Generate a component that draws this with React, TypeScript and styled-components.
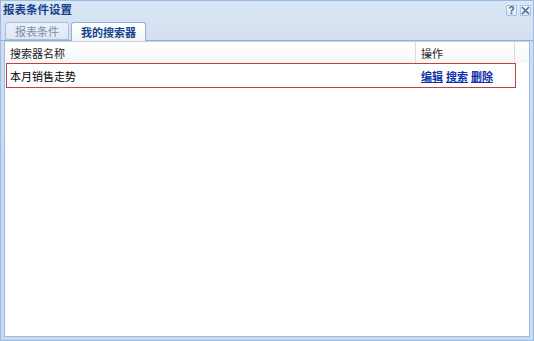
import styled, { createGlobalStyle } from 'styled-components';

const GlobalStyle = createGlobalStyle`
  html, body {
    margin: 0;
    padding: 0;
    background: #ffffff;
  }
  body {
    font-family: "Liberation Sans", "Noto Sans CJK SC", sans-serif;
    font-size: 11px;
  }
`;

const searchers = [{ id: 1, name: '本月销售走势' }];

function App() {
  return (
    <>
      <GlobalStyle />
      <Window>
        <Header>
          <Title>报表条件设置</Title>
          <Tools>
            <ToolButton title="帮助">
              <HelpGlyph>?</HelpGlyph>
            </ToolButton>
            <ToolButton title="关闭">
              <svg width="9" height="9" viewBox="0 0 9 9">
                <path d="M1 1 L8 8 M8 1 L1 8" stroke="#4a6a94" strokeWidth="1.6" fill="none" />
              </svg>
            </ToolButton>
          </Tools>
        </Header>
        <TabStrip>
          <Tab>报表条件</Tab>
          <Tab $active>我的搜索器</Tab>
        </TabStrip>
        <Body>
          <GridHeader>
            <HeadCell $width={411}>搜索器名称</HeadCell>
            <HeadCell $width={99}>操作</HeadCell>
            <HeadFiller />
          </GridHeader>
          {searchers.map((s) => (
            <Row key={s.id}>
              <NameCell>{s.name}</NameCell>
              <OpCell>
                <OpLink href="#">编辑</OpLink>
                <OpLink href="#">搜索</OpLink>
                <OpLink href="#">删除</OpLink>
              </OpCell>
            </Row>
          ))}
        </Body>
      </Window>
    </>
  );
}

const Window = styled.div`
  width: 534px;
  height: 341px;
  box-sizing: border-box;
  border: 1px solid #99bbe8;
  background: linear-gradient(#dae6f4, #cfdcee 60px, #cbd9ec);
  display: flex;
  flex-direction: column;
`;

const Header = styled.div`
  height: 19px;
  display: flex;
  align-items: center;
  justify-content: space-between;
  padding: 0 2px 0 2px;
`;

const Title = styled.div`
  color: #15428b;
  font-weight: bold;
  font-size: 11.5px;
  line-height: 14px;
  margin-top: -1px;
`;

const Tools = styled.div`
  display: flex;
  gap: 3px;
  align-items: center;
`;

const ToolButton = styled.div`
  width: 11px;
  height: 11px;
  box-sizing: border-box;
  border: 1px solid #a9c2e2;
  background: linear-gradient(#f4f8fd, #d9e5f4);
  display: flex;
  align-items: center;
  justify-content: center;
  border-radius: 1px;
`;

const HelpGlyph = styled.span`
  color: #3b5f91;
  font-weight: bold;
  font-size: 10px;
  line-height: 9px;
  font-family: "Liberation Sans", sans-serif;
`;

const TabStrip = styled.div`
  height: 18px;
  padding: 2px 0 0 4px;
  display: flex;
  align-items: flex-end;
  gap: 2px;
  border-bottom: 1px solid #8db2e3;
`;

const Tab = styled.div<{ $active?: boolean }>`
  box-sizing: border-box;
  padding: 0 9px;
  margin-bottom: ${(p) => (p.$active ? '-1px' : '0')};
  height: ${(p) => (p.$active ? '19px' : '18px')};
  display: flex;
  align-items: center;
  border: 1px solid ${(p) => (p.$active ? '#8db2e3' : '#a7c0e0')};
  border-bottom: ${(p) => (p.$active ? 'none' : '1px solid #a7c0e0')};
  border-radius: 3px 3px 0 0;
  background: ${(p) =>
    p.$active
      ? 'linear-gradient(#ffffff, #f2f6fb)'
      : 'linear-gradient(#edf2f9, #dce6f3)'};
  color: ${(p) => (p.$active ? '#15428b' : '#7d8ea8')};
  font-weight: ${(p) => (p.$active ? 'bold' : 'normal')};
  font-size: 11px;
`;

const Body = styled.div`
  flex: 1;
  margin: 0 3px 3px 3px;
  background: #ffffff;
  border: 1px solid #99bbe8;
  border-top: none;
  display: flex;
  flex-direction: column;
`;

const GridHeader = styled.div`
  height: 21px;
  display: flex;
  background: linear-gradient(#ffffff, #f7f7f7);
  border-top: 1px solid #d0d0d0;
`;

const HeadCell = styled.div<{ $width: number }>`
  width: ${(p) => p.$width}px;
  box-sizing: border-box;
  padding-left: 5px;
  border-right: 1px solid #dcdcdc;
  display: flex;
  align-items: center;
  color: #222;
  font-size: 11px;
`;

const HeadFiller = styled.div`
  flex: 1;
`;

const Row = styled.div`
  margin-left: 1px;
  width: 510px;
  height: 25px;
  box-sizing: border-box;
  border: 1px solid #c04040;
  display: flex;
  align-items: center;
`;

const NameCell = styled.div`
  width: 410px;
  padding-left: 3px;
  color: #000;
  font-size: 11px;
`;

const OpCell = styled.div`
  display: flex;
  gap: 3px;
  padding-left: 1px;
`;

const OpLink = styled.a`
  color: #0b30a8;
  font-weight: bold;
  font-size: 11px;
  text-decoration: underline;
`;

export default App;
